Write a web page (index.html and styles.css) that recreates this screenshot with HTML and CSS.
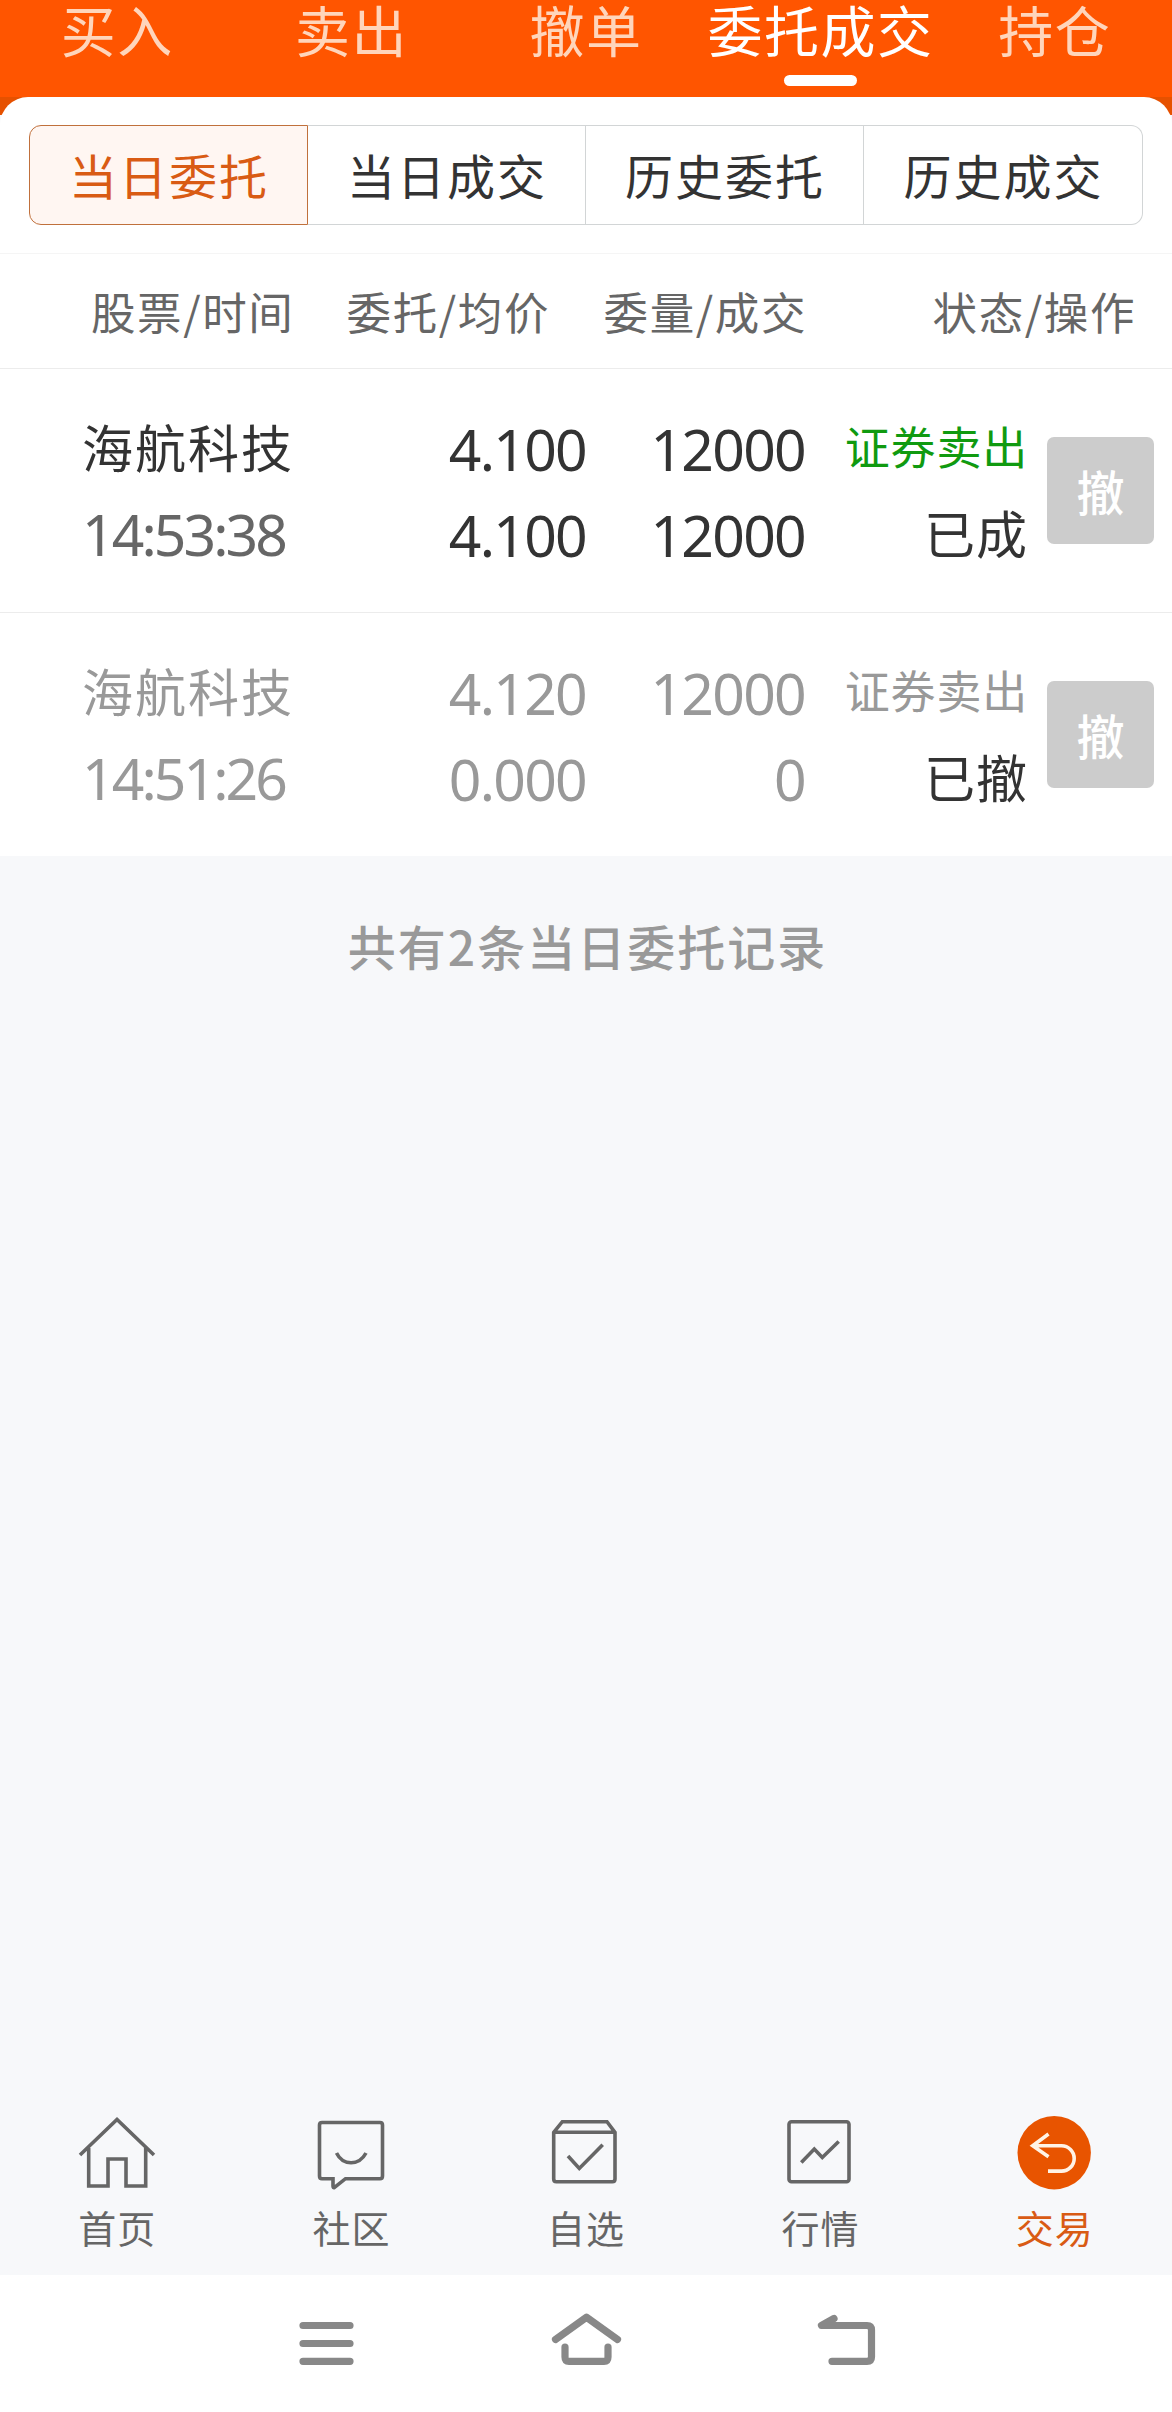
FILE: index.html
```html
<!DOCTYPE html>
<html lang="zh-CN">

<head>
    <meta charset="UTF-8">
    <meta name="viewport" content="width=device-width, initial-scale=1.0">
    <title>委托成交</title>
    <link rel="stylesheet" href="styles.css">
</head>

<body>
    <nav class="top-tabs">
        <a class="top-tab">买入</a>
        <a class="top-tab">卖出</a>
        <a class="top-tab">撤单</a>
        <a class="top-tab now">委托成交</a>
        <a class="top-tab">持仓</a>
    </nav>
    <main class="main">
        <div class="sheet">
            <div class="segment">
                <button class="seg now">当日委托</button>
                <button class="seg">当日成交</button>
                <button class="seg">历史委托</button>
                <button class="seg">历史成交</button>
            </div>
            <div class="list-head">
                <span class="head-stock">股票/时间</span>
                <span class="head-price">委托/均价</span>
                <span class="head-amount">委量/成交</span>
                <span class="head-state">状态/操作</span>
            </div>
            <div class="order">
                <div class="cell stock">
                    <span class="name">海航科技</span>
                    <span class="time">14:53:38</span>
                </div>
                <div class="cell num"><span>4.100</span><span>4.100</span></div>
                <div class="cell num"><span>12000</span><span>12000</span></div>
                <div class="cell state">
                    <span class="type">证券卖出</span>
                    <span class="result">已成</span>
                </div>
                <button class="cancel">撤</button>
            </div>
            <div class="order revoked">
                <div class="cell stock">
                    <span class="name">海航科技</span>
                    <span class="time">14:51:26</span>
                </div>
                <div class="cell num"><span>4.120</span><span>0.000</span></div>
                <div class="cell num"><span>12000</span><span>0</span></div>
                <div class="cell state">
                    <span class="type">证券卖出</span>
                    <span class="result">已撤</span>
                </div>
                <button class="cancel">撤</button>
            </div>
        </div>
        <p class="total">共有2条当日委托记录</p>
    </main>
    <nav class="tabbar">
        <a class="tab">
            <svg class="icon" viewBox="0 0 80 80">
                <path d="M3 43 40 7.5 77 43M11.7 36V74H31V47H49V74H68.7V36" />
            </svg>
            <span>首页</span>
        </a>
        <a class="tab">
            <svg class="icon" viewBox="0 0 80 80">
                <path d="M10 10.5H68Q70.5 10.5 70.5 13V64Q70.5 66.7 68 66.7H33.5L22.5 75.5Q21 76 21 74V66.7H10Q7.5 66.7 7.5 64V13Q7.5 10.5 10 10.5Z" />
                <path d="M24.5 41C31 54 47 54 54 41" />
            </svg>
            <span>社区</span>
        </a>
        <a class="tab">
            <svg class="icon" viewBox="0 0 80 80">
                <path d="M7.7 20.3 16.3 9.7H61L69 20.3V67Q69 69.7 66.3 69.7H10.4Q7.7 69.7 7.7 67ZM7.7 20.3H69" />
                <path d="M22 44 33.3 56.5 56.7 32.7" />
            </svg>
            <span>自选</span>
        </a>
        <a class="tab">
            <svg class="icon" viewBox="0 0 80 80">
                <rect x="9" y="9.7" width="60" height="60" rx="2.5" />
                <path d="M21.3 50.5 34.3 37 42.3 45.5 58.7 29.5" />
            </svg>
            <span>行情</span>
        </a>
        <a class="tab now">
            <svg class="icon" viewBox="0 0 80 80">
                <circle cx="39.2" cy="40.7" r="36.7" />
                <path d="M33.5 22 17.7 33.7 33.5 44.7M18 33.7H46.5A12.7 12.7 0 0 1 46.5 59.1H33" />
            </svg>
            <span>交易</span>
        </a>
    </nav>
    <div class="system-bar">
        <svg viewBox="0 0 80 80">
            <path d="M17 25.5H64M17 43.5H64M17 61.3H64" />
        </svg>
        <svg viewBox="0 0 80 80">
            <path d="M9.5 39.5 40.5 17.3 71.5 39.5M19 47V57Q19 61.3 23 61.3H58Q62 61.3 62 57V47" />
        </svg>
        <svg viewBox="0 0 80 80">
            <path d="M28 18.5 15.5 25.5H61Q65.5 25.5 65.5 30V57Q65.5 61.3 61 61.3H26" />
        </svg>
    </div>
</body>

</html>
```

FILE: styles.css
```css
* {
    box-sizing: border-box;
}

body {
    display: flex;
    flex-direction: column;
    height: 2412px;
    margin: 0;
    background-color: #F7F8FA;
    color: #333;
    font-family: "Noto Sans CJK SC", sans-serif;
    overflow: hidden;
}

button {
    padding: 0;
    border: 0;
    background: none;
    color: inherit;
    font-family: inherit;
}

/* 顶部标签 */
.top-tabs {
    display: grid;
    grid-template-columns: repeat(5, 1fr);
    height: 97px;
    background-color: #FF5500;
}

.top-tab {
    display: flex;
    flex-direction: column;
    align-items: center;
    color: #FFD5BB;
    font-size: 55px;
    line-height: 57px;
    letter-spacing: 1.5px;
    white-space: nowrap;
}

.top-tab.now {
    color: #FFF;
}

.top-tab.now::after {
    content: "";
    width: 73px;
    height: 11px;
    margin-top: 18px;
    border-radius: 6px;
    background-color: #FFF;
}

.main {
    flex: 1;
    background: linear-gradient(#E65100 18px, transparent 18px);
}

.sheet {
    border-radius: 28px 28px 0 0;
    background-color: #FFF;
}

.segment {
    display: grid;
    grid-template-columns: 279px 278px 278px 279px;
    height: 157px;
    padding: 28px 29px;
    border-bottom: 1px solid #F5F5F5;
}

.seg {
    height: 100px;
    padding-bottom: 3px;
    border: 1px solid #D2D5D6;
    border-left: 0;
    font-size: 48px;
    letter-spacing: 2px;
    text-indent: 1px;
}

.seg:last-child {
    border-radius: 0 12px 12px 0;
}

.seg.now {
    border: 1px solid #C0703C;
    border-radius: 12px 0 0 12px;
    background-color: #FFF6F2;
    color: #D95B14;
}

.list-head {
    display: grid;
    grid-template-columns: 203px 256px 257px 329px;
    height: 115px;
    padding-left: 91px;
    border-bottom: 1px solid #ECECEC;
    color: #666;
    font-size: 44.5px;
    line-height: 114px;
    letter-spacing: 1.6px;
    white-space: nowrap;
}

.head-price,
.head-amount,
.head-state {
    text-align: right;
}

/* 委托记录 */
.order {
    display: grid;
    grid-template-columns: 240px 264px 219px 223px 107px;
    height: 244px;
    padding-left: 82px;
    border-bottom: 1px solid #ECECEC;
}

.order:last-child {
    height: 243px;
    border-bottom: 0;
}

.cell {
    display: flex;
    flex-direction: column;
    padding-top: 34px;
    line-height: 86px;
    white-space: nowrap;
}

.name {
    font-size: 51px;
    letter-spacing: 2px;
}

.time,
.num {
    font-family: "Noto Sans", sans-serif;
    font-size: 57px;
}

.time {
    color: #666;
    line-height: 90px;
    letter-spacing: -2.9px;
}

.num {
    align-items: flex-end;
    padding-top: 37px;
    letter-spacing: -1.7px;
}

.state {
    align-items: flex-end;
}

.type {
    color: #109A10;
    font-size: 45px;
    letter-spacing: 0.8px;
}

.result {
    font-size: 51px;
    letter-spacing: 1px;
}

.cancel {
    width: 107px;
    height: 107px;
    margin: 68px 0 0 19px;
    padding-bottom: 2px;
    border-radius: 7px;
    background-color: #CCC;
    color: #FFF;
    font-size: 48px;
    font-weight: 500;
}

.revoked .name,
.revoked .time,
.revoked .num,
.revoked .type {
    color: #999;
}

.total {
    margin: 54px 0 0 3px;
    color: #999;
    font-size: 48px;
    font-weight: 500;
    line-height: 70px;
    letter-spacing: 2px;
    text-align: center;
}

/* 底部导航 */
.tabbar {
    display: grid;
    grid-template-columns: repeat(5, 1fr);
    height: 175px;
    padding-top: 12px;
}

.tab {
    display: flex;
    flex-direction: column;
    align-items: center;
    color: #666;
    font-size: 38px;
    line-height: 69px;
    letter-spacing: 1px;
}

.icon {
    width: 80px;
    height: 80px;
    fill: none;
    stroke: #666;
    stroke-width: 3.6;
}

.tab.now {
    color: #D95B14;
}

.tab.now .icon {
    stroke: #FFF3E6;
}

.tab.now circle {
    fill: #E85400;
    stroke: none;
}

.system-bar {
    display: flex;
    justify-content: center;
    gap: 180px;
    height: 137px;
    padding-top: 25px;
    background-color: #FFF;
}

.system-bar svg {
    width: 80px;
    height: 80px;
    fill: none;
    stroke: #888;
    stroke-width: 7.2;
    stroke-linecap: round;
    stroke-linejoin: round;
}
```
